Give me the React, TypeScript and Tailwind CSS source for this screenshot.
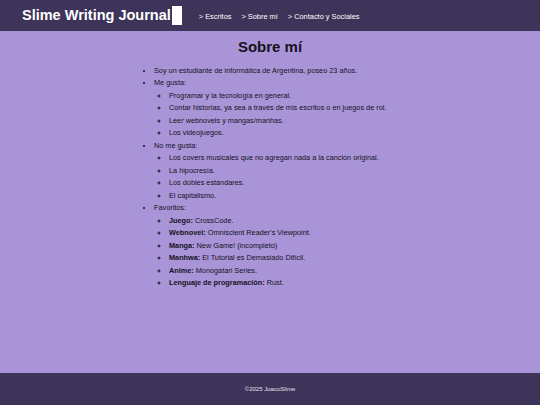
import React from 'react'

const likes = [
  'Programar y la tecnología en general.',
  'Contar historias, ya sea a través de mis escritos o en juegos de rol.',
  'Leer webnovels y mangas/manhas.',
  'Los videojuegos.',
]

const dislikes = [
  'Los covers musicales que no agregan nada a la canción original.',
  'La hipocresía.',
  'Los dobles estándares.',
  'El capitalismo.',
]

const favorites: [string, string][] = [
  ['Juego:', 'CrossCode.'],
  ['Webnovel:', "Omniscient Reader's Viewpoint."],
  ['Manga:', 'New Game! (incompleto)'],
  ['Manhwa:', 'El Tutorial es Demasiado Difícil.'],
  ['Anime:', 'Monogatari Series.'],
  ['Lenguaje de programación:', 'Rust.'],
]

function SubList({ children }: { children: React.ReactNode }) {
  return <ul className="list-[circle] pl-[15px]">{children}</ul>
}

export default function App() {
  return (
    <div
      className="flex h-[405px] flex-col bg-[#a994d8] text-[#15121d]"
      style={{ fontFamily: '"Liberation Sans", Arial, sans-serif' }}
    >
      {/* Header */}
      <header className="flex h-[31px] shrink-0 items-center bg-[#3e3359] pl-[22px] text-white">
        <div className="flex items-center">
          <span className="text-[14.5px] font-bold leading-none">Slime Writing Journal</span>
          <span className="ml-[1px] inline-block h-[19px] w-[10px] bg-white" />
        </div>
        <nav className="ml-[17px] mt-[3px] flex gap-[10px] text-[7.4px]">
          <a>&gt; Escritos</a>
          <a>&gt; Sobre mí</a>
          <a>&gt; Contacto y Sociales</a>
        </nav>
      </header>

      {/* Main */}
      <main className="flex-1">
        <h1 className="mt-[6px] text-center text-[15px] font-bold leading-[20px]">Sobre mí</h1>
        <ul className="mx-auto mt-[8px] w-[248px] list-disc pl-[8px] text-[7.3px] leading-[12.47px]">
          <li>Soy un estudiante de informática de Argentina, poseo 23 años.</li>
          <li>
            Me gusta:
            <SubList>
              {likes.map((t) => (
                <li key={t}>{t}</li>
              ))}
            </SubList>
          </li>
          <li>
            No me gusta:
            <SubList>
              {dislikes.map((t) => (
                <li key={t}>{t}</li>
              ))}
            </SubList>
          </li>
          <li>
            Favoritos:
            <SubList>
              {favorites.map(([k, v]) => (
                <li key={k}>
                  <strong>{k}</strong> {v}
                </li>
              ))}
            </SubList>
          </li>
        </ul>
      </main>

      {/* Footer */}
      <footer className="flex h-[32px] shrink-0 items-center justify-center bg-[#3e3359] text-[6px] text-[#e4e0ec]">
        ©2025 JoacoSlime
      </footer>
    </div>
  )
}
